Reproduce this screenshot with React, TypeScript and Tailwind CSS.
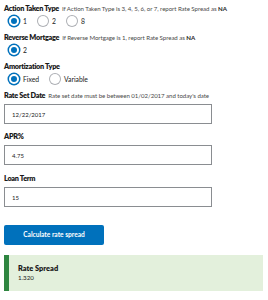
import React from "react";

interface RadioProps {
  label: string;
  checked?: boolean;
  width: string;
}

const Radio: React.FC<RadioProps> = ({ label, checked, width }) => (
  <label className={`flex items-center gap-[4px] ${width}`}>
    {checked ? (
      <span className="w-[10px] h-[10px] rounded-full bg-[#0071bc] border-[2px] border-white ring-[1.5px] ring-[#0071bc]" />
    ) : (
      <span className="w-[10px] h-[10px] rounded-full bg-white ring-[1px] ring-[#aeb0b5]" />
    )}
    <span className="text-[6.8px] leading-[12px] text-[#212121]">{label}</span>
  </label>
);

const Heading: React.FC<{ title: string; note?: React.ReactNode }> = ({ title, note }) => (
  <div className="flex items-baseline gap-[3px] h-[12px]">
    <span className="text-[7.3px] leading-[12px] font-extrabold text-[#1b1b1b] tracking-[-0.3px]">{title}</span>
    {note && <span className="text-[6.1px] leading-[12px] text-[#4a4a4a] tracking-[-0.05px]">{note}</span>}
  </div>
);

const Field: React.FC<{ value: string }> = ({ value }) => (
  <div className="w-[208px] h-[20px] border border-[#8a8d91] bg-white flex items-center px-[7px] text-[6px] text-[#212121]">
    {value}
  </div>
);

export default function App() {
  return (
    <div className="w-[268px] h-[300px] bg-white px-[4px] pt-[3px] font-['Lato',sans-serif]">
      <Heading
        title="Action Taken Type"
        note={<>If Action Taken Type is 3, 4, 5, 6, or 7, report Rate Spread as <b className="text-[#1b1b1b]">NA</b></>}
      />
      <div className="flex pl-[5px] h-[12px]">
        <Radio label="1" checked width="w-[29px]" />
        <Radio label="2" width="w-[29px]" />
        <Radio label="8" width="w-[29px]" />
      </div>

      <div className="mt-[5px]">
        <Heading
          title="Reverse Mortgage"
          note={<>If Reverse Mortgage is 1, report Rate Spread as <b className="text-[#1b1b1b]">NA</b></>}
        />
      </div>
      <div className="flex pl-[5px] h-[12px]">
        <Radio label="2" checked width="w-[29px]" />
      </div>

      <div className="mt-[5px]">
        <Heading title="Amortization Type" />
      </div>
      <div className="flex pl-[5px] h-[12px]">
        <Radio label="Fixed" checked width="w-[41px]" />
        <Radio label="Variable" width="w-[41px]" />
      </div>

      <div className="mt-[5px]">
        <Heading title="Rate Set Date" note="Rate set date must be between 01/02/2017 and today's date" />
      </div>
      <div className="mt-[2px]">
        <Field value="12/22/2017" />
      </div>

      <div className="mt-[7px]">
        <Heading title="APR%" />
      </div>
      <div className="mt-[2px]">
        <Field value="4.75" />
      </div>

      <div className="mt-[8px]">
        <Heading title="Loan Term" />
      </div>
      <div className="mt-[2px]">
        <Field value="15" />
      </div>

      <button className="block mt-[18px] w-[100px] h-[20px] rounded-[2px] bg-[#0071bc] text-white text-[6.6px] font-bold">
        Calculate rate spread
      </button>

      <div className="mt-[10px] w-[259px] h-[36px] bg-[#e3f0dc] border-l-[5px] border-[#2e8540] pl-[9px] flex flex-col justify-center">
        <span className="text-[7.4px] font-extrabold text-[#1b1b1b] leading-[9px]">Rate Spread</span>
        <span className="text-[6.2px] text-[#212121] leading-[9px]">1.320</span>
      </div>
    </div>
  );
}
